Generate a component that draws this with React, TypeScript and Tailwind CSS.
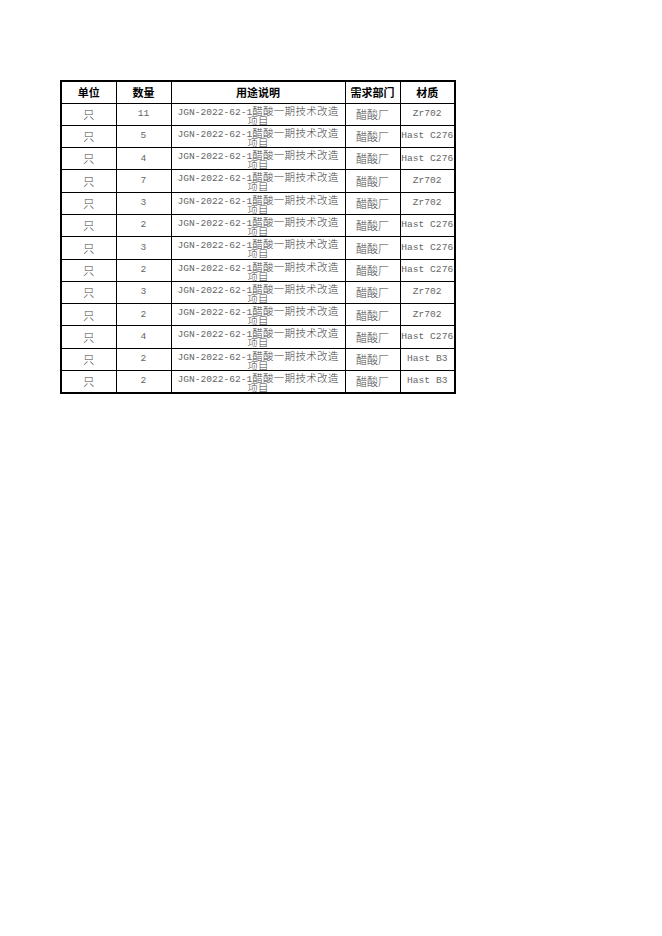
const rows: [string, string, string][] = [
  ['只', '11', 'Zr702'],
  ['只', '5', 'Hast C276'],
  ['只', '4', 'Hast C276'],
  ['只', '7', 'Zr702'],
  ['只', '3', 'Zr702'],
  ['只', '2', 'Hast C276'],
  ['只', '3', 'Hast C276'],
  ['只', '2', 'Hast C276'],
  ['只', '3', 'Zr702'],
  ['只', '2', 'Zr702'],
  ['只', '4', 'Hast C276'],
  ['只', '2', 'Hast B3'],
  ['只', '2', 'Hast B3'],
];

const cjk = "font-['Noto_Sans_CJK_SC',sans-serif] text-[11px] font-light";
const cjkSmall = "font-['Noto_Sans_CJK_SC',sans-serif] text-[10.5px] font-light";
const mono = "font-['Liberation_Mono','Noto_Sans_CJK_SC',monospace] text-[9.6px] text-[#666]";
const cell = 'border border-black p-0 text-center align-middle';

export default function App() {
  return (
    <div className="h-[936px] w-[662px] bg-white pl-[60px] pt-[80px]">
      <table className="table-fixed border-collapse border-2 border-black text-[#444]">
        <colgroup>
          <col className="w-[55px]" />
          <col className="w-[55px]" />
          <col className="w-[174px]" />
          <col className="w-[55px]" />
          <col className="w-[55px]" />
        </colgroup>
        <thead>
          <tr className="h-[22px]">
            {['单位', '数量', '用途说明', '需求部门', '材质'].map((h) => (
              <th key={h} className={`${cell} font-['Noto_Sans_CJK_SC',sans-serif] text-[11px] font-bold text-black`}>
                {h}
              </th>
            ))}
          </tr>
        </thead>
        <tbody>
          {rows.map(([unit, qty, mat], i) => (
            <tr key={i} className="h-[22.3px]">
              <td className={`${cell} ${cjk}`}>{unit}</td>
              <td className={`${cell} ${mono}`}>{qty}</td>
              <td className={`${cell} align-top`}>
                <div className="h-[21px] overflow-hidden">
                  <div className="h-[11px] whitespace-nowrap leading-[11px]">
                    <span className={`${mono} leading-[11px]`}>JGN-2022-62-1</span>
                    <span className={`${cjkSmall} leading-[11px] tracking-[0.3px]`}>醋酸一期技术改造</span>
                  </div>
                  <div className={`${cjkSmall} h-[11px] leading-[11px]`}>项目</div>
                </div>
              </td>
              <td className={`${cell} ${cjk}`}>醋酸厂</td>
              <td className={`${cell} ${mono} whitespace-nowrap`}>{mat}</td>
            </tr>
          ))}
        </tbody>
      </table>
    </div>
  );
}
